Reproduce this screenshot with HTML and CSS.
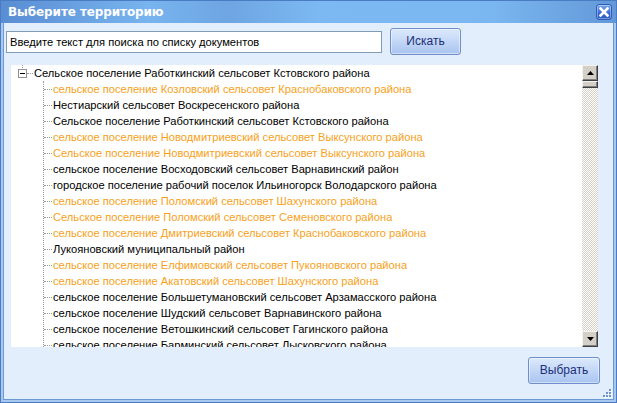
FILE: index.html
```html
<!DOCTYPE html>
<html lang="ru">
<head>
<meta charset="utf-8">
<title>Выберите территорию</title>
<link rel="stylesheet" href="styles.css">
</head>
<body>
<div class="window">
  <div class="titlebar">
    <span class="title">Выберите территорию</span>
    <span class="close">
      <svg width="10" height="10" viewBox="0 0 10 10"><path d="M1.5 1.5 L8.5 8.5 M8.5 1.5 L1.5 8.5" stroke="#fff" stroke-width="2.6" stroke-linecap="square"/></svg>
    </span>
  </div>
  <div class="body">
    <div class="search">
      <div class="input">Введите текст для поиска по списку документов</div>
      <div class="btn">Искать</div>
    </div>
    <div class="list">
      <div class="tree">
        <div class="root"><span class="box"></span><span class="label">Сельское поселение Работкинский сельсовет Кстовского района</span></div>
        <div class="children">
          <div class="item org">сельское поселение Козловский сельсовет Краснобаковского района</div>
          <div class="item">Нестиарский сельсовет Воскресенского района</div>
          <div class="item">Сельское поселение Работкинский сельсовет Кстовского района</div>
          <div class="item org">сельское поселение Новодмитриевский сельсовет Выксунского района</div>
          <div class="item org">Сельское поселение Новодмитриевский сельсовет Выксунского района</div>
          <div class="item">сельское поселение Восходовский сельсовет Варнавинский район</div>
          <div class="item">городское поселение рабочий поселок Ильиногорск Володарского района</div>
          <div class="item org">сельское поселение Поломский сельсовет Шахунского района</div>
          <div class="item org">Сельское поселение Поломский сельсовет Семеновского района</div>
          <div class="item org">сельское поселение Дмитриевский сельсовет Краснобаковского района</div>
          <div class="item">Лукояновский муниципальный район</div>
          <div class="item org">сельское поселение Елфимовский сельсовет Пукояновского района</div>
          <div class="item org">сельское поселение Акатовский сельсовет Шахунского района</div>
          <div class="item">сельское поселение Большетумановский сельсовет Арзамасского района</div>
          <div class="item">сельское поселение Шудский сельсовет Варнавинского района</div>
          <div class="item">сельское поселение Ветошкинский сельсовет Гагинского района</div>
          <div class="item">сельское поселение Барминский сельсовет Лысковского района</div>
        </div>
      </div>
      <div class="scrollbar">
        <div class="sbtn"><svg width="7" height="4" viewBox="0 0 7 4"><path d="M3.5 0 L7 4 L0 4 Z" fill="#000"/></svg></div>
        <div class="thumb"></div>
        <div class="track"></div>
        <div class="sbtn"><svg width="7" height="4" viewBox="0 0 7 4"><path d="M0 0 L7 0 L3.5 4 Z" fill="#000"/></svg></div>
      </div>
    </div>
    <div class="footer">
      <div class="btn">Выбрать</div>
    </div>
    <svg class="grip" width="10" height="10" viewBox="0 0 10 10">
      <rect x="7" y="1" width="2" height="2" fill="#fff"/>
      <rect x="4" y="4" width="2" height="2" fill="#fff"/>
      <rect x="7" y="4" width="2" height="2" fill="#fff"/>
      <rect x="1" y="7" width="2" height="2" fill="#fff"/>
      <rect x="4" y="7" width="2" height="2" fill="#fff"/>
      <rect x="7" y="7" width="2" height="2" fill="#fff"/>
      <rect x="6" y="0" width="2" height="2" fill="#6b94cf"/>
      <rect x="3" y="3" width="2" height="2" fill="#6b94cf"/>
      <rect x="6" y="3" width="2" height="2" fill="#6b94cf"/>
      <rect x="0" y="6" width="2" height="2" fill="#6b94cf"/>
      <rect x="3" y="6" width="2" height="2" fill="#6b94cf"/>
      <rect x="6" y="6" width="2" height="2" fill="#6b94cf"/>
    </svg>
  </div>
</div>
</body>
</html>
```
FILE: styles.css
```css
html, body {
  margin: 0;
  padding: 0;
  background: #e2eefc;
}
.window {
  width: 617px;
  height: 403px;
  box-sizing: border-box;
  border: 1px solid #4a7cc4;
  display: flex;
  flex-direction: column;
  font-family: "Liberation Sans", Arial, sans-serif;
  font-size: 11.15px;
  overflow: hidden;
}
.titlebar {
  height: 22px;
  flex: none;
  display: flex;
  align-items: center;
  justify-content: space-between;
  padding: 0 4px 0 7px;
  background: linear-gradient(to right, #5a8dd3 0%, #78b4ef 24%, #6ea5e2 37%, #7cb9f2 52%, #7ab6ef 80%, #6398d8 100%);
}
.title {
  color: #fff;
  font-family: "DejaVu Sans", Verdana, sans-serif;
  font-weight: bold;
  font-size: 12px;
  letter-spacing: -0.1px;
}
.close {
  width: 16px;
  height: 16px;
  box-sizing: border-box;
  border-radius: 3px;
  border: 1px solid #2f5fb8;
  background: linear-gradient(#7aa8ee, #3b6fd6 55%, #2a5bc4);
  box-shadow: inset 0 0 0 1px rgba(255,255,255,0.35);
  display: flex;
  align-items: center;
  justify-content: center;
}
.body {
  flex: 1;
  position: relative;
  border: 2px solid #a9c8f0;
  border-top: none;
  box-shadow: inset 1px 0 #6b99d6, inset -1px 0 #6b99d6, inset 0 -1px #6b99d6;
  background: #e2eefc;
  padding: 5px 14px 15px 3px;
  display: flex;
  flex-direction: column;
}
.search {
  display: flex;
  align-items: center;
  gap: 8px;
  height: 27px;
}
.input {
  width: 376px;
  height: 22px;
  box-sizing: border-box;
  border: 1px solid #7f9db9;
  background: #fff;
  padding: 0 3px;
  line-height: 20px;
  color: #000;
  white-space: nowrap;
  overflow: hidden;
}
.btn {
  width: 71px;
  height: 27px;
  box-sizing: border-box;
  border: 1px solid #6f8fcb;
  border-radius: 3px;
  background: linear-gradient(#dce9fb, #c3d7f6 50%, #a9c4f0);
  box-shadow: inset 0 0 0 1px rgba(255,255,255,0.45);
  color: #1c2f78;
  font-size: 12px;
  text-align: center;
  line-height: 25px;
}
.list {
  margin: 10px 2px 0 5px;
  height: 282px;
  background: #fff;
  display: flex;
}
.tree {
  flex: 1;
  overflow: hidden;
  color: #000;
  white-space: nowrap;
}
.root {
  position: relative;
  height: 16px;
  line-height: 16px;
  padding-left: 7px;
  display: flex;
  align-items: center;
}
.root::before {
  content: "";
  position: absolute;
  left: 11px;
  top: 0;
  height: 3px;
  border-left: 1px dotted #9a9a9a;
}
.box {
  width: 9px;
  height: 9px;
  box-sizing: border-box;
  border: 1px solid #919191;
  background: #fff;
  position: relative;
  flex: none;
}
.box::after {
  content: "";
  position: absolute;
  left: 1px;
  top: 3px;
  width: 5px;
  height: 1px;
  background: #000;
}
.root .label {
  position: relative;
  padding-left: 7px;
}
.root .label::before {
  content: "";
  position: absolute;
  left: 0;
  top: 8px;
  width: 6px;
  border-top: 1px dotted #9a9a9a;
}
.children {
  margin-left: 32px;
  border-left: 1px dotted #9a9a9a;
}
.item {
  position: relative;
  height: 16px;
  line-height: 16px;
  padding-left: 9px;
}
.item::before {
  content: "";
  position: absolute;
  left: 0;
  top: 8px;
  width: 8px;
  border-top: 1px dotted #9a9a9a;
}
.org {
  color: #f7a11a;
}
.scrollbar {
  width: 16px;
  flex: none;
  display: flex;
  flex-direction: column;
}
.sbtn, .thumb {
  box-sizing: border-box;
  background: #d4d0c8;
  border: 1px solid;
  border-color: #f4f3ef #404040 #404040 #f4f3ef;
  box-shadow: inset -1px -1px #808080;
}
.sbtn {
  height: 16px;
  display: flex;
  align-items: center;
  justify-content: center;
}
.thumb {
  height: 7px;
}
.track {
  flex: 1;
  background: repeating-conic-gradient(#d4d0c8 0 25%, #ffffff 0 50%) 0 0 / 2px 2px;
}
.footer {
  margin-top: 10px;
  display: flex;
  justify-content: flex-end;
}
.footer .btn {
  width: 72px;
}
.grip {
  position: absolute;
  right: 1px;
  bottom: 1px;
}
```
